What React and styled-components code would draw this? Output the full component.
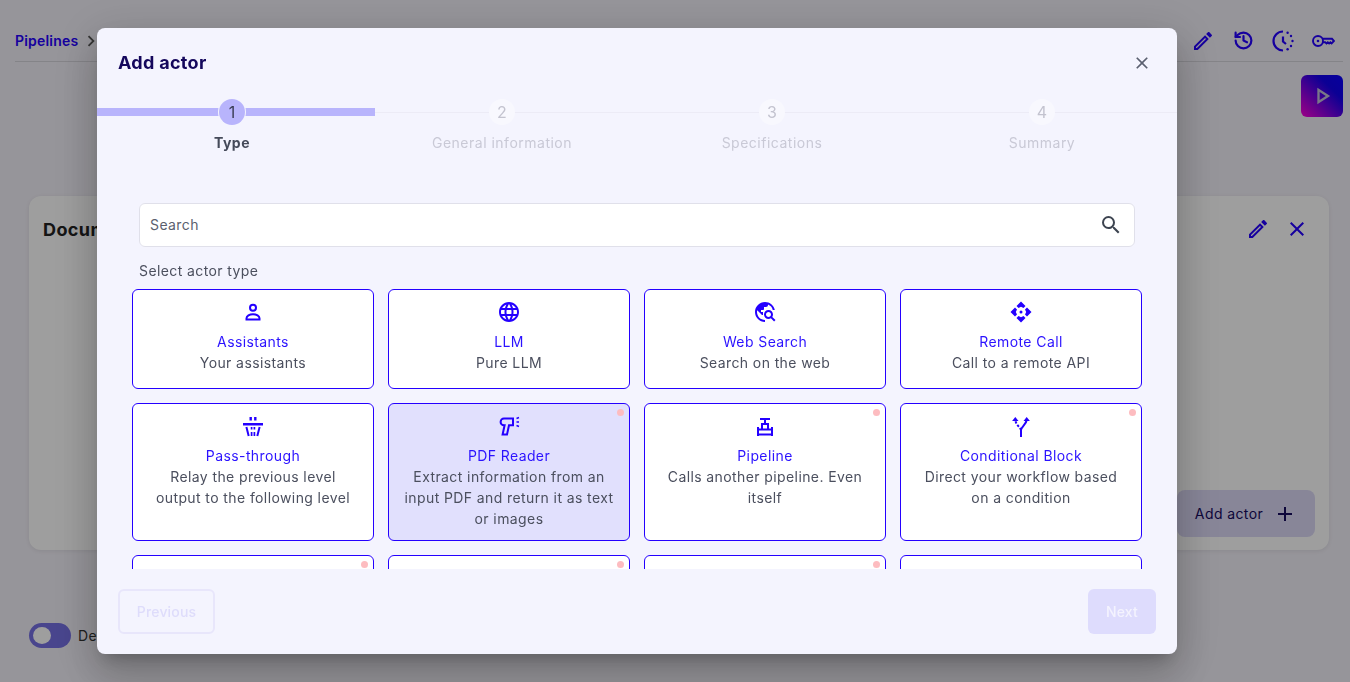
import React from 'react'
import styled, { createGlobalStyle } from 'styled-components'
import {
  MdOutlineEdit,
  MdClose,
  MdSearch,
  MdAdd,
  MdLanguage,
  MdTravelExplore,
  MdOutlinePlayArrow,
  MdChevronRight
} from 'react-icons/md'
import { History } from 'lucide-react'

const BLUE = '#2400ff'
const FONT = `Inter, 'Open Sans', sans-serif`

const GlobalStyle = createGlobalStyle`
  html, body {
    margin: 0;
    height: 100%;
    overflow: hidden;
    background: #f2f0f8;
    font-family: ${FONT};
    font-size: 14px;
    letter-spacing: 0.4px;
  }
  * {
    box-sizing: border-box;
  }
`

// Page behind the dialog
const Page = styled.div`
  height: 682px;
  padding: 0 7px 0 15px;
  overflow: hidden;
`
const TopBar = styled.div`
  height: 62px;
  display: flex;
  align-items: center;
  justify-content: space-between;
  padding-top: 20px;
  border-bottom: 1px solid #d6d5dc;
`
const Crumb = styled.div`
  display: flex;
  align-items: center;
  color: ${BLUE};
  font-weight: 600;
  letter-spacing: 0.2px;
  svg {
    color: #555;
    margin-left: 2px;
  }
`
const IconRow = styled.div`
  display: flex;
  color: ${BLUE};
`
const IconSlot = styled.div`
  width: ${props => props.$width || 40}px;
  height: 40px;
  display: flex;
  align-items: center;
  justify-content: center;
`
const PlayRow = styled.div`
  display: flex;
  justify-content: flex-end;
  margin-top: 13px;
`
const PlayButton = styled.div`
  width: 42px;
  height: 42px;
  border-radius: 6px;
  display: flex;
  align-items: center;
  justify-content: center;
  color: #c4c0dc;
  background: linear-gradient(45deg, #ff00d8 0%, #1200f0 70%, #0a00ff 100%);
`
const LevelCard = styled.div`
  height: 354px;
  margin: 79px 14px 0;
  border-radius: 12px;
  background: #fff;
  padding: 13px 14px 13px;
  display: flex;
  flex-direction: column;
  justify-content: space-between;
  box-shadow: 0 1px 4px rgba(0, 0, 0, 0.08);
`
const LevelHead = styled.div`
  display: flex;
  align-items: center;
  justify-content: space-between;
  font-size: 18px;
  font-weight: 700;
  color: #222;
`
const LevelFoot = styled.div`
  display: flex;
  justify-content: flex-end;
`
const AddActor = styled.div`
  width: 138px;
  height: 47px;
  border-radius: 8px;
  background: #dcd9f6;
  color: #160a5e;
  display: flex;
  align-items: center;
  justify-content: center;
  gap: 10px;
`
const ToggleRow = styled.div`
  display: flex;
  align-items: center;
  gap: 7px;
  margin: 73px 0 0 14px;
  color: #333;
`
const Toggle = styled.div`
  width: 42px;
  height: 25px;
  border-radius: 13px;
  background: #7670e4;
  padding: 4px;
`
const Knob = styled.div`
  width: 18px;
  height: 17px;
  border-radius: 50%;
  background: #fff;
`

// Dialog
const Overlay = styled.div`
  position: fixed;
  inset: 0;
  padding: 28px 173px 28px 97px;
  background: rgba(0, 0, 0, 0.38);
  display: flex;
`
const Dialog = styled.div`
  flex: 1;
  display: flex;
  flex-direction: column;
  min-width: 0;
  background: #f4f4fe;
  border-radius: 8px;
  overflow: hidden;
  box-shadow: 0 11px 15px -7px rgba(0, 0, 0, 0.2), 0 24px 38px 3px rgba(0, 0, 0, 0.14),
    0 9px 46px 8px rgba(0, 0, 0, 0.12);
`
const DialogHead = styled.div`
  height: 71px;
  flex: none;
  display: flex;
  align-items: center;
  justify-content: space-between;
  padding: 0 25px 1px 21px;
`
const DialogTitle = styled.div`
  margin-bottom: 2px;
  font-size: 18px;
  font-weight: 700;
  letter-spacing: 0.3px;
  color: #14075c;
`
const CloseButton = styled.div`
  display: flex;
  color: #5b6070;
`
const Stepper = styled.div`
  position: relative;
  flex: none;
  display: grid;
  grid-template-columns: repeat(4, 1fr);
  &::before {
    content: '';
    position: absolute;
    left: 0;
    right: 0;
    top: 13px;
    height: 1px;
    background: #ecebf6;
  }
  &::after {
    content: '';
    position: absolute;
    left: 0;
    width: 278px;
    top: 9px;
    height: 8px;
    background: #b8b4fc;
  }
`
const Step = styled.div`
  position: relative;
  z-index: 1;
  display: flex;
  flex-direction: column;
  align-items: center;
`
const StepNumber = styled.div`
  width: 26px;
  height: 26px;
  border-radius: 50%;
  display: flex;
  align-items: center;
  justify-content: center;
  font-size: 16px;
  letter-spacing: 0;
  background: ${props => (props.$active ? '#b8b4fc' : '#f8f8fe')};
  color: ${props => (props.$active ? '#3a3d55' : '#c3c3cf')};
  box-shadow: ${props => (props.$active ? '0 0 0 1px #f4f4fe' : 'none')};
`
const StepLabel = styled.div`
  margin-top: 7px;
  line-height: 21px;
  letter-spacing: 0.5px;
  font-weight: ${props => (props.$active ? 700 : 400)};
  color: ${props => (props.$active ? '#454a5a' : '#c9c9d6')};
`
const DialogBody = styled.div`
  flex: 1;
  min-height: 0;
  display: flex;
  flex-direction: column;
  padding: 0 42px;
`
const SearchBox = styled.div`
  flex: none;
  height: 44px;
  margin-top: 50px;
  display: flex;
  align-items: center;
  justify-content: space-between;
  padding: 0 11px 0 10px;
  background: #fff;
  border: 1px solid #e0e0ea;
  border-radius: 6px;
  color: #5b5f6e;
  svg {
    color: #3d4450;
  }
`
const Placeholder = styled.span`
  margin-bottom: 2px;
`
const SectionLabel = styled.div`
  flex: none;
  margin: 13px 0 8px;
  line-height: 21px;
  color: #4b4f5e;
`
const ScrollArea = styled.div`
  flex: 1;
  min-height: 0;
  margin: 0 -7px;
  overflow: hidden;
`
const ActorGrid = styled.div`
  display: grid;
  grid-template-columns: repeat(4, 242px);
  gap: 14px;
`
const ActorCard = styled.div`
  position: relative;
  min-height: 100px;
  display: flex;
  flex-direction: column;
  align-items: center;
  padding: 10px 14px 11px;
  text-align: center;
  line-height: 21px;
  border: 1px solid ${BLUE};
  border-radius: 6px;
  background: ${props => (props.$selected ? '#e1e0fd' : '#fff')};
`
const Dot = styled.span`
  position: absolute;
  top: 5px;
  right: 5px;
  width: 7px;
  height: 7px;
  border-radius: 50%;
  background: #fdbcc0;
`
const ActorIcon = styled.div`
  width: 24px;
  height: 24px;
  margin-bottom: 7px;
  color: ${BLUE};
  svg {
    display: block;
  }
`
const ActorName = styled.div`
  color: #2b12ff;
`
const ActorText = styled.div`
  color: #4b4f5e;
`
const DialogFoot = styled.div`
  flex: none;
  height: 85px;
  display: flex;
  align-items: flex-start;
  justify-content: space-between;
  padding: 20px 21px 0;
  letter-spacing: 0.15px;
`
const PrevButton = styled.div`
  width: 97px;
  height: 45px;
  display: flex;
  align-items: center;
  justify-content: center;
  font-weight: 500;
  color: #dedcfb;
  border: 2px solid #e8e6fb;
  border-radius: 6px;
`
const NextButton = styled.div`
  width: 68px;
  height: 45px;
  display: flex;
  align-items: center;
  justify-content: center;
  font-weight: 500;
  color: #f4f3fe;
  background: #dedcfd;
  border-radius: 6px;
`

// Icons with no match in the packages
const TimerIcon = () => (
  <svg width="24" height="24" viewBox="0 0 24 24" fill="none" stroke="currentColor" strokeWidth="2.2">
    <path d="M12 2.5a9.5 9.5 0 0 0 0 19" />
    <path d="M12 7.5v5l3 2.5" />
    <g fill="currentColor" stroke="none">
      <circle cx="16.6" cy="3.7" r="1.2" />
      <circle cx="20" cy="7" r="1.2" />
      <circle cx="21.5" cy="12" r="1.2" />
      <circle cx="20" cy="17" r="1.2" />
      <circle cx="16.6" cy="20.3" r="1.2" />
    </g>
  </svg>
)
const KeyIcon = () => (
  <svg width="24" height="24" viewBox="0 0 24 24" fill="none" stroke="currentColor" strokeWidth="1.9">
    <circle cx="7" cy="12" r="5" />
    <circle cx="7" cy="12" r="1.3" fill="currentColor" stroke="none" />
    <path d="M11.6 9.8H21l2 2.2-2.4 2.4-1.2-1.1-1.3 1.1-1.3-1.1-1.3 1.1-1.3-1.1h-3" />
  </svg>
)
const PersonIcon = () => (
  <svg width="24" height="24" viewBox="0 0 24 24" fill="none" stroke="currentColor" strokeWidth="2">
    <circle cx="12" cy="7.7" r="3" />
    <path d="M5.5 19.5v-1.3c0-2.2 3-4 6.5-4s6.5 1.8 6.5 4v1.3z" />
  </svg>
)
const RemoteIcon = () => (
  <svg width="24" height="24" viewBox="0 0 24 24" fill="currentColor">
    <circle cx="12" cy="12" r="1.5" />
    {[0, 90, 180, 270].map(angle => (
      <path
        key={angle}
        d="M12 1.5L16.5 6l-2 2L12 6.8 9.5 8l-2-2z"
        transform={`rotate(${angle} 12 12)`}
      />
    ))}
  </svg>
)
const PassThroughIcon = () => (
  <svg width="24" height="24" viewBox="0 0 24 24" fill="none" stroke="currentColor" strokeWidth="2">
    <path d="M9.7 3v3.4M14.3 3v3.4M2 10.2h20" strokeWidth="2.4" />
    <path d="M5.4 13l2.3 9M18.6 13l-2.3 9" />
    <path d="M10.6 13v2.4M10.6 18v4M13.4 13v2.4M13.4 18v4" strokeWidth="1.7" />
  </svg>
)
const ReaderIcon = () => (
  <svg width="24" height="24" viewBox="0 0 24 24" fill="none" stroke="currentColor" strokeWidth="2">
    <path d="M7 4.5h9v6.8h-4L10 20.5H5.6l2-9.2H7a3.4 3.4 0 0 1 0-6.8z" />
    <path d="M19.5 4.5l2.5-1M19.5 8H22M19.5 11.5l2.5 1" strokeWidth="1.4" />
  </svg>
)
const ValveIcon = () => (
  <svg width="24" height="24" viewBox="0 0 24 24" fill="none" stroke="currentColor" strokeWidth="2">
    <path d="M7 5h10M12 5v5M9 15v-5h6v5M5 13v9M19 13v9M5 15.5h14M5 20.5h14" />
  </svg>
)
const SplitIcon = () => (
  <svg width="24" height="24" viewBox="0 0 24 24" fill="none" stroke="currentColor" strokeWidth="2">
    <path d="M12 23v-7c0-3 5-5 5.7-10" />
    <path d="M12 16c-1-3-5-5-5.7-10" strokeDasharray="2.4 1.6" />
    <path d="M17.7 3l3.2 4h-6.4zM6.3 3l3.2 4H3.1z" fill="currentColor" stroke="none" />
  </svg>
)

const STEPS = ['Type', 'General information', 'Specifications', 'Summary']

const ACTORS = [
  { icon: <PersonIcon />, name: 'Assistants', text: 'Your assistants' },
  { icon: <MdLanguage size={24} />, name: 'LLM', text: 'Pure LLM' },
  { icon: <MdTravelExplore size={24} />, name: 'Web Search', text: 'Search on the web' },
  { icon: <RemoteIcon />, name: 'Remote Call', text: 'Call to a remote API' },
  {
    icon: <PassThroughIcon />,
    name: 'Pass-through',
    text: 'Relay the previous level output to the following level'
  },
  {
    icon: <ReaderIcon />,
    name: 'PDF Reader',
    text: 'Extract information from an input PDF and return it as text or images',
    selected: true,
    dot: true
  },
  {
    icon: <ValveIcon />,
    name: 'Pipeline',
    text: 'Calls another pipeline. Even itself',
    dot: true
  },
  {
    icon: <SplitIcon />,
    name: 'Conditional Block',
    text: 'Direct your workflow based on a condition',
    dot: true
  },
  { dot: true },
  { dot: true },
  { dot: true },
  {}
]

const App = () => (
  <React.Fragment>
    <GlobalStyle />
    <Page>
      <TopBar>
        <Crumb>
          Pipelines
          <MdChevronRight size={22} />
        </Crumb>
        <IconRow>
          <IconSlot>
            <MdOutlineEdit size={24} />
          </IconSlot>
          <IconSlot>
            <History size={21} strokeWidth={2.5} />
          </IconSlot>
          <IconSlot>
            <TimerIcon />
          </IconSlot>
          <IconSlot>
            <KeyIcon />
          </IconSlot>
        </IconRow>
      </TopBar>
      <PlayRow>
        <PlayButton>
          <MdOutlinePlayArrow size={28} />
        </PlayButton>
      </PlayRow>
      <LevelCard>
        <LevelHead>
          Document
          <IconRow>
            <IconSlot $width={42}>
              <MdOutlineEdit size={24} />
            </IconSlot>
            <IconSlot $width={36}>
              <MdClose size={24} />
            </IconSlot>
          </IconRow>
        </LevelHead>
        <LevelFoot>
          <AddActor>
            Add actor
            <MdAdd size={24} />
          </AddActor>
        </LevelFoot>
      </LevelCard>
      <ToggleRow>
        <Toggle>
          <Knob />
        </Toggle>
        Debug
      </ToggleRow>
    </Page>
    <Overlay>
      <Dialog>
        <DialogHead>
          <DialogTitle>Add actor</DialogTitle>
          <CloseButton>
            <MdClose size={20} />
          </CloseButton>
        </DialogHead>
        <Stepper>
          {STEPS.map((label, index) => (
            <Step key={label}>
              <StepNumber $active={index === 0}>{index + 1}</StepNumber>
              <StepLabel $active={index === 0}>{label}</StepLabel>
            </Step>
          ))}
        </Stepper>
        <DialogBody>
          <SearchBox>
            <Placeholder>Search</Placeholder>
            <MdSearch size={24} />
          </SearchBox>
          <SectionLabel>Select actor type</SectionLabel>
          <ScrollArea>
            <ActorGrid>
              {ACTORS.map((actor, index) => (
                <ActorCard key={index} $selected={actor.selected}>
                  {actor.dot && <Dot />}
                  {actor.name && (
                    <React.Fragment>
                      <ActorIcon>{actor.icon}</ActorIcon>
                      <ActorName>{actor.name}</ActorName>
                      <ActorText>{actor.text}</ActorText>
                    </React.Fragment>
                  )}
                </ActorCard>
              ))}
            </ActorGrid>
          </ScrollArea>
        </DialogBody>
        <DialogFoot>
          <PrevButton>Previous</PrevButton>
          <NextButton>Next</NextButton>
        </DialogFoot>
      </Dialog>
    </Overlay>
  </React.Fragment>
)

export default App
